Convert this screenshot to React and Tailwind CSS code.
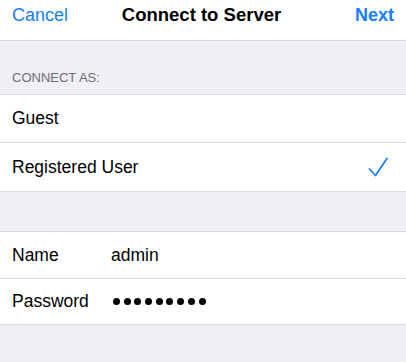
const font = { fontFamily: '"Liberation Sans", Arial, sans-serif' }

function Check() {
  return (
    <svg width="20" height="20" viewBox="0 0 20 20" fill="none">
      <path d="M1.5 12 L7.5 18.5 L19 1.5" stroke="#147efb" strokeWidth="1.7" strokeLinecap="round" strokeLinejoin="round" />
    </svg>
  )
}

function Row({ h, children, last }) {
  return (
    <div className={`flex items-center pl-3 pr-[18px] bg-white ${h} ${last ? '' : 'border-b border-[#dcdce0]'}`}>
      {children}
    </div>
  )
}

export default function App() {
  return (
    <div className="w-[406px] h-[362px] bg-[#efeff4] overflow-hidden text-black" style={font}>
      {/* Nav bar */}
      <div className="h-[41px] bg-white border-b border-[#d6d6da] grid grid-cols-[1fr_auto_1fr] items-start px-3 pt-[4px] leading-[22px] text-[18px]">
        <span className="text-[#147efb]">Cancel</span>
        <span className="font-bold text-[18.5px] -ml-[3px]">Connect to Server</span>
        <span className="font-bold text-[#147efb] text-right">Next</span>
      </div>

      {/* Connect as */}
      <div className="h-[54px] flex items-end pl-3 pb-[8px] text-[13px] text-[#6d6d72] leading-[16px] border-b border-[#dcdce0]">
        CONNECT AS:
      </div>
      <div className="text-[17.5px]">
        <Row h="h-[48px]">Guest</Row>
        <div className="flex items-center justify-between pl-3 pr-[18px] bg-white h-[49px] border-b border-[#dcdce0]">
          <span>Registered User</span>
          <span className="mb-[1px]"><Check /></span>
        </div>
      </div>

      <div className="h-[40px] border-b border-[#dcdce0]" />

      <div className="text-[17.5px]">
        <Row h="h-[47px]">
          <span className="w-[99px]">Name</span>
          <span>admin</span>
        </Row>
        <div className="flex items-center pl-3 bg-white h-[46px] border-b border-[#dcdce0]">
          <span className="w-[101px]">Password</span>
          <span className="flex gap-[3.7px]">
            {Array.from({ length: 9 }, (_, i) => (
              <span key={i} className="w-[7px] h-[7px] rounded-full bg-black" />
            ))}
          </span>
        </div>
      </div>
    </div>
  )
}
